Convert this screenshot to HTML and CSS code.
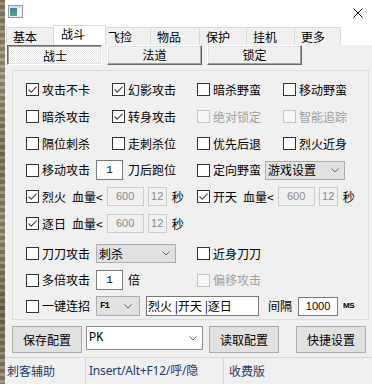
FILE: index.html
```html
<!DOCTYPE html>
<html>
<head>
<meta charset="utf-8">
<link rel="stylesheet" href="styles.css">
</head>
<body>
<div class="desk"></div>
<div class="win">
  <div class="titlebar">
    <svg class="appicon" width="15" height="13" viewBox="0 0 15 13">
      <defs>
        <linearGradient id="g1" x1="0" y1="0" x2="0" y2="1">
          <stop offset="0" stop-color="#3a7fb8"/>
          <stop offset="1" stop-color="#5aa66a"/>
        </linearGradient>
      </defs>
      <rect x="0.5" y="0.5" width="14" height="12" fill="#e9eef3" stroke="#9a9a9a"/>
      <rect x="2" y="3" width="7" height="8" fill="url(#g1)"/>
      <rect x="9" y="3" width="4" height="8" fill="#f4f8fc"/>
      <rect x="2" y="1.5" width="11" height="1" fill="#c9d3dc"/>
    </svg>
    <svg class="close" width="10" height="10" viewBox="0 0 10 10">
      <path d="M0.5 0.5 L9.5 9.5 M9.5 0.5 L0.5 9.5" stroke="#111" stroke-width="1" fill="none"/>
    </svg>
  </div>
  <div class="tabs">
    <div class="tab t1">基本</div>
    <div class="tab t2 sel">战斗</div>
    <div class="tab t3">飞捡</div>
    <div class="tab t4">物品</div>
    <div class="tab t5">保护</div>
    <div class="tab t6">挂机</div>
    <div class="tab t7">更多</div>
  </div>
  <div class="page">
    <div class="subbtns">
      <div class="sbtn on">战士</div>
      <div class="sbtn">法道</div>
      <div class="sbtn">锁定</div>
    </div>
    <div class="group">
      <div class="row">
        <div class="chk"><span class="cb on"><svg viewBox="0 0 11 11" width="11" height="11"><path d="M1.5 5.5 L4.2 8.2 L9.6 2.6" stroke="#444" stroke-width="1.1" fill="none"/></svg></span>攻击不卡</div>
        <div class="chk"><span class="cb on"><svg viewBox="0 0 11 11" width="11" height="11"><path d="M1.5 5.5 L4.2 8.2 L9.6 2.6" stroke="#444" stroke-width="1.1" fill="none"/></svg></span>幻影攻击</div>
        <div class="chk"><span class="cb"></span>暗杀野蛮</div>
        <div class="chk"><span class="cb"></span>移动野蛮</div>
      </div>
      <div class="row">
        <div class="chk"><span class="cb"></span>暗杀攻击</div>
        <div class="chk"><span class="cb on"><svg viewBox="0 0 11 11" width="11" height="11"><path d="M1.5 5.5 L4.2 8.2 L9.6 2.6" stroke="#444" stroke-width="1.1" fill="none"/></svg></span>转身攻击</div>
        <div class="chk dis"><span class="cb"></span>绝对锁定</div>
        <div class="chk dis"><span class="cb"></span>智能追踪</div>
      </div>
      <div class="row">
        <div class="chk"><span class="cb"></span>隔位刺杀</div>
        <div class="chk"><span class="cb"></span>走刺杀位</div>
        <div class="chk"><span class="cb"></span>优先后退</div>
        <div class="chk"><span class="cb"></span>烈火近身</div>
      </div>
      <div class="row h26">
        <div class="chk span2"><span class="cb"></span>移动攻击<span class="num">1</span><span class="after">刀后跑位</span></div>
        <div class="chk span2"><span class="cb"></span>定向野蛮<span class="dd w80 ml4"><span>游戏设置</span><svg width="8" height="5" viewBox="0 0 8 5"><path d="M0.5 0.5 L4 4 L7.5 0.5" stroke="#666" fill="none"/></svg></span></div>
      </div>
      <div class="row">
        <div class="chk span2"><span class="cb on"><svg viewBox="0 0 11 11" width="11" height="11"><path d="M1.5 5.5 L4.2 8.2 L9.6 2.6" stroke="#444" stroke-width="1.1" fill="none"/></svg></span>烈火<span class="hp">血量&lt;</span><span class="din w37">600</span><span class="din w19">12</span><span class="sec">秒</span></div>
        <div class="chk span2"><span class="cb on"><svg viewBox="0 0 11 11" width="11" height="11"><path d="M1.5 5.5 L4.2 8.2 L9.6 2.6" stroke="#444" stroke-width="1.1" fill="none"/></svg></span>开天<span class="hp">血量&lt;</span><span class="din w37">600</span><span class="din w19">12</span><span class="sec">秒</span></div>
      </div>
      <div class="row">
        <div class="chk span2"><span class="cb on"><svg viewBox="0 0 11 11" width="11" height="11"><path d="M1.5 5.5 L4.2 8.2 L9.6 2.6" stroke="#444" stroke-width="1.1" fill="none"/></svg></span>逐日<span class="hp">血量&lt;</span><span class="din w37">600</span><span class="din w19">12</span><span class="sec">秒</span></div>
      </div>
      <div class="row mt3">
        <div class="chk span2"><span class="cb"></span>刀刀攻击<span class="dd w80 ml6"><span>刺杀</span><svg width="8" height="5" viewBox="0 0 8 5"><path d="M0.5 0.5 L4 4 L7.5 0.5" stroke="#666" fill="none"/></svg></span></div>
        <div class="chk span2"><span class="cb"></span>近身刀刀</div>
      </div>
      <div class="row h26">
        <div class="chk span2"><span class="cb"></span>多倍攻击<span class="num">1</span><span class="after">倍</span></div>
        <div class="chk span2 dis"><span class="cb"></span>偏移攻击</div>
      </div>
      <div class="row h26 flexrow">
        <div class="chk"><span class="cb"></span>一键连招</div>
        <span class="dd w44 ml6 f1"><span class="f1t">F1</span><svg width="8" height="5" viewBox="0 0 8 5"><path d="M0.5 0.5 L4 4 L7.5 0.5" stroke="#666" fill="none"/></svg></span>
        <span class="txt">烈火 |开天 |逐日</span>
        <span class="gap">间隔</span>
        <span class="num w40 ms1000">1000</span>
        <span class="ms">MS</span>
      </div>
    </div>
    <div class="bottom">
      <div class="btn">保存配置</div>
      <div class="combo"><span class="pk">PK</span><svg width="8" height="5" viewBox="0 0 8 5"><path d="M0.5 0.5 L4 4 L7.5 0.5" stroke="#666" fill="none"/></svg></div>
      <div class="btn b2">读取配置</div>
      <div class="btn b3">快捷设置</div>
    </div>
  </div>
  <div class="status">
    <div class="pane p1">刺客辅助</div>
    <div class="pane p2">Insert/Alt+F12/呼/隐</div>
    <div class="pane p3">收费版</div>
  </div>
</div>
</body>
</html>
```

FILE: styles.css
```css
* { box-sizing: border-box; }
html, body { margin: 0; padding: 0; }
body {
  width: 372px;
  height: 384px;
  overflow: hidden;
  display: flex;
  font-family: "Noto Sans CJK SC", sans-serif;
  font-size: 12px;
  line-height: 14px;
  color: #000;
  background: #f0f0f0;
}
.desk {
  width: 5px;
  height: 384px;
  background:
    repeating-linear-gradient(180deg, rgba(60,50,30,0.25) 0 2px, rgba(255,255,240,0.12) 2px 5px, rgba(40,35,20,0.2) 5px 7px),
    linear-gradient(180deg, #8c7f5e 0%, #a39a86 20%, #7d7257 40%, #9a8f74 60%, #6f6650 80%, #958a70 100%);
}
.win {
  flex: 1;
  display: flex;
  flex-direction: column;
  background: #f0f0f0;
}
.titlebar {
  height: 25px;
  background: #fff;
  display: flex;
  justify-content: space-between;
  align-items: flex-start;
  padding: 0 9px 0 3px;
}
.appicon { margin-top: 5px; }
.close { margin-top: 8px; }
.tabs {
  height: 20px;
  background: #fff;
  display: flex;
  align-items: flex-end;
  padding-left: 1px;
}
.tab {
  height: 18px;
  background: #f0f0f0;
  border-top: 1px solid #d9d9d9;
  border-left: 1px solid #d9d9d9;
  padding: 2px 0 0 6px;
}
.tab.sel {
  height: 20px;
  background: #fff;
  border-right: 1px solid #d9d9d9;
  padding: 1px 0 0 7px;
}
.t1 { width: 47px; }
.t2 { width: 53px; }
.t3 { width: 44px; border-left: none; padding-left: 2px; }
.t4 { width: 49px; }
.t5 { width: 47px; }
.t6 { width: 48px; }
.t7 { width: 47px; border-right: 1px solid #d9d9d9; }
.page {
  height: 312px;
  display: flex;
  flex-direction: column;
}
.subbtns {
  display: flex;
  gap: 5px;
  padding-left: 2px;
  height: 20px;
}
.sbtn {
  width: 95px;
  height: 20px;
  text-align: center;
  line-height: 17px;
  background: #f0f0f0;
  border: 1px solid;
  border-color: #fff #696969 #696969 #fff;
  box-shadow: inset -1px -1px 0 #a0a0a0, inset 1px 1px 0 #e3e3e3;
}
.sbtn.on {
  border-color: #696969 #fff #fff #696969;
  box-shadow: inset 1px 1px 0 #a0a0a0, inset -1px -1px 0 #e3e3e3;
  background: repeating-conic-gradient(#ffffff 0 25%, #e6e6e6 0 50%) 0 0 / 2px 2px;
  padding-top: 1px;
  padding-left: 1px;
}
.group {
  margin: 5px 0 0 7px;
  width: 357px;
  height: 250px;
  border: 1px solid #dcdcdc;
  padding-top: 5px;
}
.row {
  height: 27px;
  display: grid;
  grid-template-columns: 86px 85px 86px 1fr;
  align-items: center;
  padding-left: 13px;
}
.row.h26 { height: 26px; }
.row.mt3 { margin-top: 3px; }
.row.flexrow { display: flex; }
.chk {
  display: flex;
  align-items: center;
  white-space: nowrap;
}
.span2 { grid-column: span 2; }
.cb {
  width: 13px;
  height: 13px;
  border: 1px solid #333;
  background: #fff;
  margin-right: 3px;
  display: flex;
  align-items: center;
  justify-content: center;
  flex: none;
}
.chk.dis { color: #a0a0a0; }
.chk.dis .cb { border-color: #c4c4c4; background: #f7f7f7; }
.num {
  width: 27px;
  height: 20px;
  border: 1px solid #7a7a7a;
  background: #fff;
  font-family: "Liberation Mono", monospace;
  font-size: 11px;
  line-height: 18px;
  text-align: center;
  margin: 0 5px 0 6px;
  flex: none;
}
.num.w40 {
  width: 40px;
  height: 19px;
  line-height: 17px;
  font-family: "Liberation Sans", sans-serif;
  font-size: 11px;
  margin: 0 5px 0 6px;
}
.hp { margin: 0 4px 0 6px; }
.din {
  height: 19px;
  border: 1px solid #cccccc;
  background: #f0f0f0;
  color: #8a8a8a;
  font-family: "Liberation Sans", sans-serif;
  font-size: 11px;
  line-height: 17px;
  text-align: center;
  margin-right: 4px;
  flex: none;
}
.w37 { width: 37px; }
.w19 { width: 19px; }
.sec { margin-left: 1px; }
.dd {
  height: 19px;
  border: 1px solid #adadad;
  background: #e1e1e1;
  display: flex;
  align-items: center;
  justify-content: space-between;
  padding: 0 5px 0 2px;
  flex: none;
}
.w80 { width: 80px; }
.w44 { width: 44px; height: 20px; padding-right: 7px; }
.ml4 { margin-left: 4px; }
.ml6 { margin-left: 6px; }
.f1t {
  font-family: "Liberation Mono", monospace;
  font-size: 9px;
  font-weight: bold;
  letter-spacing: -1px;
  padding-left: 1px;
}
.txt {
  width: 113px;
  height: 20px;
  border: 1px solid #7a7a7a;
  background: #fff;
  margin-left: 6px;
  padding-left: 1px;
  line-height: 18px;
  white-space: pre;
  flex: none;
}
.gap { margin-left: 9px; }
.ms {
  font-family: "Liberation Sans", sans-serif;
  font-size: 8px;
  font-weight: bold;
  letter-spacing: -0.5px;
}
.bottom {
  display: flex;
  align-items: flex-start;
  margin: 6px 0 0 7px;
  height: 27px;
}
.btn {
  width: 70px;
  height: 27px;
  border: 1px solid #adadad;
  background: #e1e1e1;
  text-align: center;
  line-height: 25px;
  flex: none;
}
.combo {
  width: 117px;
  height: 24px;
  margin-left: 4px;
  border: 1px solid #8f8f8f;
  background: #fff;
  display: flex;
  align-items: center;
  justify-content: space-between;
  padding: 0 5px 0 2px;
}
.pk {
  font-family: "Liberation Mono", monospace;
  font-size: 12px;
}
.b2 { margin-left: 6px; }
.b3 { margin-left: 17px; }
.status {
  height: 27px;
  border-top: 1px solid #d7d7d7;
  display: flex;
  color: #1f3a70;
}
.pane {
  height: 26px;
  line-height: 26px;
  white-space: nowrap;
}
.p1 { width: 81px; padding-left: 2px; border-right: 1px solid #d7d7d7; }
.p2 {
  width: 138px;
  padding-left: 3px;
  border-right: 1px solid #d7d7d7;
  font-family: "Noto Sans", "Noto Sans CJK SC", sans-serif;
  letter-spacing: -0.2px;
}
.p3 { padding-left: 5px; }
```
